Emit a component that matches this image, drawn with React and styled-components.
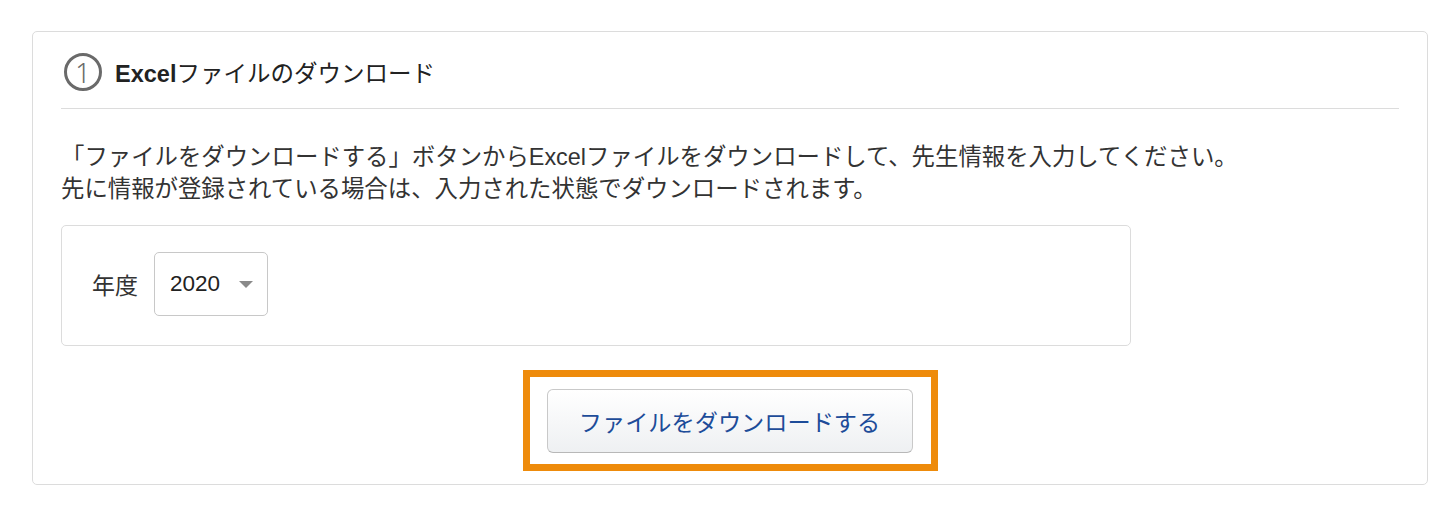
import React from 'react';
import styled, { createGlobalStyle } from 'styled-components';

const GlobalStyle = createGlobalStyle`
  body {
    margin: 0;
    background: #fff;
    color: #333;
    font-family: "Liberation Sans", "Noto Sans CJK JP", sans-serif;
  }
`;

const Page = styled.div`
  padding: 31px 0 0 32px;
`;

const Card = styled.section`
  box-sizing: border-box;
  width: 1396px;
  border: 1px solid #dcdcdc;
  border-radius: 5px;
  padding: 0 28px 13px;
`;

const Header = styled.div`
  display: flex;
  align-items: center;
  gap: 13px;
  padding: 21px 0 17px 3px;
  border-bottom: 1px solid #dcdcdc;
`;

const StepMark = styled.span`
  box-sizing: border-box;
  width: 38px;
  height: 38px;
  border: 3px solid #6a6a6a;
  border-radius: 50%;
  display: flex;
  align-items: center;
  justify-content: center;
  color: #6a6a6a;
  font-family: "Noto Sans", "Liberation Sans", sans-serif;
  font-weight: 300;
  font-size: 27px;
  line-height: 1;
`;

const Title = styled.h2`
  margin: 0;
  font-size: 23.5px;
  font-weight: normal;
  color: #222;

  b {
    font-weight: bold;
  }
`;

const Description = styled.p`
  margin: 32px 0 20px;
  font-size: 23.4px;
  line-height: 32px;
`;

const FilterBox = styled.div`
  box-sizing: border-box;
  width: 1070px;
  border: 1px solid #dcdcdc;
  border-radius: 5px;
  padding: 26px 30px 29px;
  display: flex;
  align-items: center;
  gap: 16px;
`;

const Label = styled.span`
  font-size: 23px;
`;

const Select = styled.div`
  box-sizing: border-box;
  width: 114px;
  height: 64px;
  border: 1px solid #c8c8c8;
  border-radius: 5px;
  padding: 0 14px 0 15px;
  display: flex;
  align-items: center;
  justify-content: space-between;
  font-size: 22.5px;
  color: #222;
`;

const Caret = styled.span`
  width: 0;
  height: 0;
  border-left: 7px solid transparent;
  border-right: 7px solid transparent;
  border-top: 7px solid #8a8a8a;
`;

const Actions = styled.div`
  display: flex;
  justify-content: center;
  padding-top: 24px;
`;

const Highlight = styled.div`
  border: 7px solid #ee8b0b;
  padding: 12px 18px 11px 17px;
`;

const Button = styled.button`
  box-sizing: border-box;
  width: 366px;
  height: 64px;
  border: 1px solid #c9c9c9;
  border-bottom-color: #b8b8b8;
  border-radius: 6px;
  background: linear-gradient(#ffffff, #eef0f2);
  color: #1d4c99;
  font-family: "Liberation Sans", "Noto Sans CJK JP", sans-serif;
  font-size: 23.2px;
  cursor: pointer;
`;

export default function App() {
  return (
    <>
      <GlobalStyle />
      <Page>
        <Card>
          <Header>
            <StepMark>1</StepMark>
            <Title>
              <b>Excel</b>ファイルのダウンロード
            </Title>
          </Header>
          <Description>
            「ファイルをダウンロードする」ボタンからExcelファイルをダウンロードして、先生情報を入力してください。
            <br />
            先に情報が登録されている場合は、入力された状態でダウンロードされます。
          </Description>
          <FilterBox>
            <Label>年度</Label>
            <Select>
              2020
              <Caret />
            </Select>
          </FilterBox>
          <Actions>
            <Highlight>
              <Button>ファイルをダウンロードする</Button>
            </Highlight>
          </Actions>
        </Card>
      </Page>
    </>
  );
}
